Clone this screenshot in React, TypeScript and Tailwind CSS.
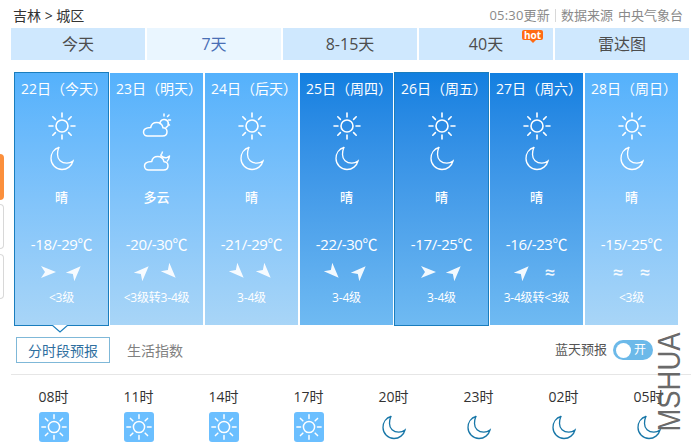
const font = { fontFamily: '"Open Sans", "Noto Sans CJK SC", sans-serif' };

type Wind = "right" | "ne" | "se" | "haze";

type Day = {
  date: string;
  top: string;
  bottom: string;
  weather: string;
  temp: string;
  winds: [Wind, Wind];
  level: string;
  dark?: boolean;
  selected?: boolean;
  pointer?: boolean;
};

const days: Day[] = [
  { date: "22日（今天）", top: "sun", bottom: "moon", weather: "晴", temp: "-18/-29℃", winds: ["right", "ne"], level: "<3级", selected: true, pointer: true },
  { date: "23日（明天）", top: "cloudsun", bottom: "cloudmoon", weather: "多云", temp: "-20/-30℃", winds: ["ne", "se"], level: "<3级转3-4级" },
  { date: "24日（后天）", top: "sun", bottom: "moon", weather: "晴", temp: "-21/-29℃", winds: ["se", "se"], level: "3-4级" },
  { date: "25日（周四）", top: "sun", bottom: "moon", weather: "晴", temp: "-22/-30℃", winds: ["se", "ne"], level: "3-4级", dark: true },
  { date: "26日（周五）", top: "sun", bottom: "moon", weather: "晴", temp: "-17/-25℃", winds: ["right", "ne"], level: "3-4级", dark: true, selected: true },
  { date: "27日（周六）", top: "sun", bottom: "moon", weather: "晴", temp: "-16/-23℃", winds: ["ne", "haze"], level: "3-4级转<3级", dark: true },
  { date: "28日（周日）", top: "sun", bottom: "moon", weather: "晴", temp: "-15/-25℃", winds: ["haze", "haze"], level: "<3级" },
];

const tabs = ["今天", "7天", "8-15天", "40天", "雷达图"];
const hours = ["08时", "11时", "14时", "17时", "20时", "23时", "02时", "05时"];

function Sun({ size = 30, stroke = "#fff" }: { size?: number; stroke?: string }) {
  return (
    <svg width={size} height={size} viewBox="0 0 30 30" fill="none" stroke={stroke} strokeWidth="1.6" strokeLinecap="round">
      <circle cx="15" cy="15" r="6" />
      <path d="M15 2v4M15 24v4M2 15h4M24 15h4M5.8 5.8l2.6 2.6M21.6 21.6l2.6 2.6M5.8 24.2l2.6-2.6M21.6 8.400l2.600-2.600" />
    </svg>
  );
}

function Moon({ size = 30, stroke = "#fff" }: { size?: number; stroke?: string }) {
  return (
    <svg width={size} height={size} viewBox="0 0 30 30" fill="none" stroke={stroke} strokeWidth="1.3">
      <path d="M12 4.500C7 5.800 4 10.300 4 15.500c0 6 5 11 11 11 5.200 0 9.800-3.500 11-8.500-1.800 1.500-4 2.200-6.200 2.200-5.500 0-9.300-3.700-9.300-8.700 0-2.800.6-5.300 1.500-7.500z" />
    </svg>
  );
}

function CloudSun() {
  return (
    <svg width="30" height="30" viewBox="0 0 30 30" fill="none" stroke="#fff" strokeWidth="1.5" strokeLinecap="round">
      <path d="M5.500 25h15c3 0 4.500-2 4.500-4.300 0-2.300-1.800-4-4-4-.8-3.500-3.500-5.200-6.300-5.200-3.200 0-5.500 2.200-6 5C4 16.700 1.500 18.500 1.500 21c0 2.300 1.800 4 4 4z" />
      <path d="M18 12.500a4.200 4.200 0 1 1 6 4" />
      <path d="M22 3v2M28.500 9h-2M27 4l-1.500 1.500M27.500 14l-1.500-1" />
    </svg>
  );
}

function CloudMoon() {
  return (
    <svg width="30" height="30" viewBox="0 0 30 30" fill="none" stroke="#fff" strokeWidth="1.5" strokeLinejoin="round">
      <path d="M6.500 27h15c3 0 4.500-2 4.500-4.300 0-2.300-1.800-4-4-4-.8-3.500-3.500-5.200-6.300-5.200-3.200 0-5.500 2.200-6 5C5 18.700 2.500 20.500 2.500 23c0 2.300 1.800 4 4 4z" />
      <path d="M18.500 12c1.500 2 4 3 6.500 2.500 1-.3 1.800-.8 2.500-1.500-.2 2.200-1 4-2.500 5.500M18.500 12c.8-.3 1.800-1.800 2-3.500" />
    </svg>
  );
}

function WeatherIcon({ name }: { name: string }) {
  if (name === "sun") return <Sun />;
  if (name === "moon") return <Moon />;
  if (name === "cloudsun") return <CloudSun />;
  return <CloudMoon />;
}

function WindIcon({ wind }: { wind: Wind }) {
  if (wind === "haze") {
    return <span className="flex h-[18px] w-[18px] items-center justify-center text-[18px] font-semibold leading-none text-white/90">≈</span>;
  }
  const rotation = wind === "right" ? 0 : wind === "ne" ? -45 : 45;
  return (
    <svg width="18" height="18" viewBox="0 0 18 18" style={{ transform: `rotate(${rotation}deg)` }}>
      <path d="M17 9 2 3l4 6-4 6z" fill="#fff" fillOpacity="0.92" />
    </svg>
  );
}

function DayCard({ day }: { day: Day }) {
  const gradient = day.dark
    ? "from-[#117fe0] to-[#6fbaf2]"
    : "from-[#54b1fc] to-[#a8d5f7]";
  const box = day.selected ? "-m-px w-[95px] border border-[#1a7dbd]" : "w-[93px]";
  return (
    <div className={`relative flex shrink-0 flex-col items-center bg-gradient-to-b pt-[6px] text-white ${gradient} ${box}`}>
      <div className="ml-[5px] h-5 whitespace-nowrap text-[14px] leading-5">{day.date}</div>
      <div className="mt-[12px] h-[30px]"><WeatherIcon name={day.top} /></div>
      <div className="mt-[2px] h-[30px]"><WeatherIcon name={day.bottom} /></div>
      <div className="mt-[14px] h-5 text-[13px] font-medium leading-5">{day.weather}</div>
      <div className="mt-[27px] h-5 whitespace-nowrap text-[15px] leading-5 tracking-[-0.4px]">{day.temp}</div>
      <div className="mt-[9px] flex h-[18px] gap-[9px]">
        <WindIcon wind={day.winds[0]} />
        <WindIcon wind={day.winds[1]} />
      </div>
      <div className="mt-[9px] h-4 whitespace-nowrap text-[12px] leading-4 tracking-[-0.2px]">{day.level}</div>
      {day.pointer && (
        <svg className="absolute left-[37px] top-[252px]" width="16" height="8" viewBox="0 0 16 8">
          <path d="M0 0 8 7 16 0" fill="#fff" stroke="#1a7dbd" strokeWidth="1.2" />
        </svg>
      )}
    </div>
  );
}

export default function App() {
  return (
    <div className="relative h-[448px] w-[691px] overflow-hidden bg-white" style={font}>
      <div className="absolute left-0 top-[154px] h-[46px] w-1 rounded-r-sm bg-[#fb8f3c]" />
      <div className="absolute left-0 top-[204px] h-[45px] w-1 rounded-r-sm border border-l-0 border-[#d8d8d8]" />
      <div className="absolute left-0 top-[254px] h-[45px] w-1 rounded-r-sm border border-l-0 border-[#d8d8d8]" />

      <div className="flex h-7 items-start justify-between pl-[13px] pr-[8px] pt-[6px]">
        <div className="text-[14px] leading-[19px] text-[#333]">吉林 &gt; 城区</div>
        <div className="flex items-center text-[13px] leading-[19px] text-[#8a8a8a]">
          <span className="tracking-[0.2px]">05:30更新</span>
          <span className="mx-[5px] h-[13px] w-px bg-[#d8d8d8]" />
          <span>数据来源</span>
          <span className="ml-[5px]">中央气象台</span>
        </div>
      </div>

      <div className="ml-[11px] flex gap-[2px]">
        {tabs.map((tab) => (
          <div
            key={tab}
            className={`relative flex h-[32px] w-[134px] items-center justify-center text-[16px] ${tab === "7天" ? "bg-[#eaf6ff] text-[#4a6fb5]" : "bg-[#cfe8fe] text-[#4d4d4d]"}`}
          >
            {tab}
            {tab === "40天" && (
              <span className="absolute right-[10px] top-[2px] rounded-[2px] bg-[#ff6a13] px-[2px] text-[10px] font-bold leading-[10px] text-white">
                hot
                <span className="absolute left-[8px] top-[10px] border-x-[3px] border-t-[3px] border-x-transparent border-t-[#ff6a13]" />
              </span>
            )}
          </div>
        ))}
      </div>

      <div className="ml-[15px] mt-[13px] flex h-[252px] items-stretch gap-[2px]">
        {days.map((day) => (
          <DayCard key={day.date} day={day} />
        ))}
      </div>

      <div className="ml-4 mt-3 flex h-[26px] items-center pr-[38px]">
        <div className="flex h-[26px] w-[94px] items-center justify-center border border-[#7fb8d8] text-[14px] text-[#2f6f9f]">分时段预报</div>
        <div className="ml-[17px] text-[14px] text-[#808080]">生活指数</div>
        <div className="ml-auto flex items-center text-[13px] text-[#555]">
          蓝天预报
          <div className="ml-[6px] flex h-5 w-10 items-center rounded-full bg-[#6cb9e9] pl-[3px] text-[12px] text-white">
            <span className="h-[15px] w-[15px] rounded-full bg-white" />
            <span className="ml-[3px] leading-none">开</span>
          </div>
        </div>
      </div>

      <div className="ml-[11px] mt-[11px] h-px bg-[#e6e6e6]" />

      <div className="ml-[11px] mt-[12px] flex">
        {hours.map((hour, i) => (
          <div key={hour} className="flex w-[85px] shrink-0 flex-col items-center">
            <div className="h-5 text-[14px] leading-5 text-[#333]">{hour}</div>
            <div className="mt-[5px]">
              {i < 4 ? (
                <div className="flex h-[30px] w-[30px] items-center justify-center rounded-[3px] bg-[#6bbfff]">
                  <Sun size={28} />
                </div>
              ) : (
                <Moon size={30} stroke="#1877a8" />
              )}
            </div>
          </div>
        ))}
      </div>

      <div
        className="absolute left-[669px] top-[382px] origin-center -translate-x-1/2 -translate-y-1/2 -rotate-90 scale-x-[0.885] whitespace-nowrap text-[31px] leading-none text-[#555]/90"
        style={{ fontFamily: '"Liberation Sans", sans-serif' }}
      >
        MSHUA
      </div>
    </div>
  );
}
